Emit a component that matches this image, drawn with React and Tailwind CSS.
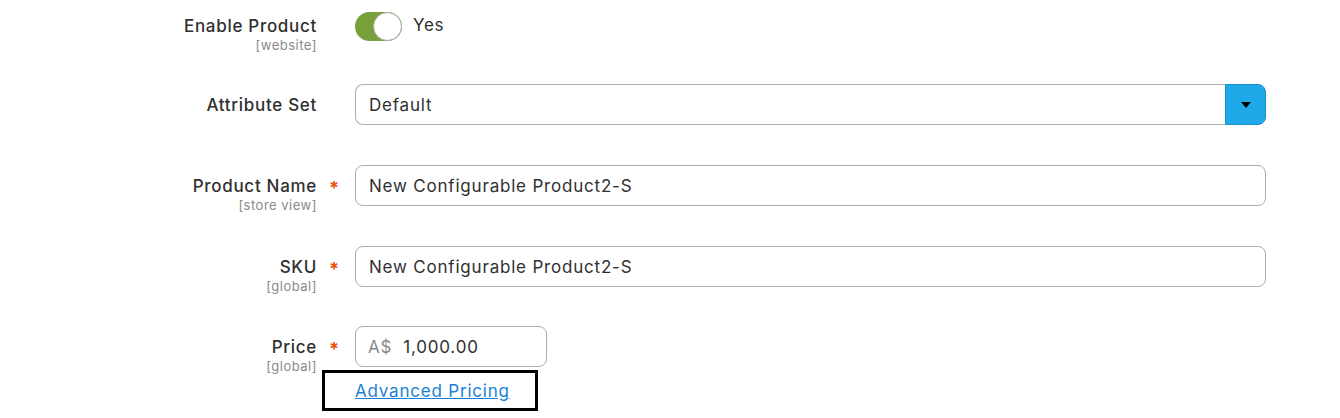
import React from "react";

const font = { fontFamily: "Inter, 'Open Sans', sans-serif" };

function Label({ title, scope, required, top = "pt-[11px]" }) {
  return (
    <>
      <div className={`w-[317px] shrink-0 text-right ${top}`}>
        <div className="text-[17px] leading-[20px] tracking-[0.7px] text-[#303030] font-medium">{title}</div>
        {scope && <div className="text-[13px] leading-[18px] tracking-[0.5px] text-[#8a8a8a]">{scope}</div>}
      </div>
      <div className={`w-[38px] shrink-0 pl-[12px] ${top}`}>
        {required && <span className="text-[18px] leading-[20px] font-bold text-[#eb5202]">*</span>}
      </div>
    </>
  );
}

function TextInput({ value }) {
  return (
    <div className="w-[911px] h-[41px] border border-[#adadad] rounded-[8px] bg-white flex items-center pt-[2px] pl-[13px] text-[17px] tracking-[0.8px] text-[#303030]">
      {value}
    </div>
  );
}

export default function App() {
  return (
    <div className="w-[1340px] h-[418px] bg-white overflow-hidden pt-[12px]" style={font}>
      {/* Enable Product */}
      <div className="flex items-start h-[29px]">
        <Label title="Enable Product" scope="[website]" top="pt-[4px]" />
        <div className="flex items-center gap-[11px]">
          <div className="w-[47px] h-[29px] rounded-full bg-[#79a13b] flex items-center justify-end">
            <div className="w-[29px] h-[29px] rounded-full bg-white border border-[#a9a9a9]" />
          </div>
          <span className="text-[17px] tracking-[0.7px] text-[#303030] -mt-[2px]">Yes</span>
        </div>
      </div>

      {/* Attribute Set */}
      <div className="flex items-start h-[41px] mt-[43px]">
        <Label title="Attribute Set" />
        <div className="w-[911px] h-[41px] flex">
          <div className="flex-1 border border-r-0 border-[#adadad] rounded-l-[8px] flex items-center pt-[2px] pl-[13px] text-[17px] tracking-[0.8px] text-[#303030]">
            Default
          </div>
          <div className="w-[41px] bg-[#1fa9e8] border border-[#1a8fc9] rounded-r-[8px] flex items-center justify-center">
            <div className="w-0 h-0 border-l-[5px] border-r-[5px] border-t-[6px] border-l-transparent border-r-transparent border-t-black" />
          </div>
        </div>
      </div>

      {/* Product Name */}
      <div className="flex items-start h-[41px] mt-[40px]">
        <Label title="Product Name" scope="[store view]" required />
        <TextInput value="New Configurable Product2-S" />
      </div>

      {/* SKU */}
      <div className="flex items-start h-[41px] mt-[40px]">
        <Label title="SKU" scope="[global]" required />
        <TextInput value="New Configurable Product2-S" />
      </div>

      {/* Price */}
      <div className="flex items-start h-[41px] mt-[39px]">
        <Label title="Price" scope="[global]" required />
        <div className="w-[192px] h-[41px] border border-[#adadad] rounded-[8px] flex items-center pt-[2px] pl-[12px] text-[17px] tracking-[0.8px]">
          <span className="text-[#8a8a8a]">A$</span>
          <span className="ml-[11px] text-[#303030]">1,000.00</span>
        </div>
      </div>

      <div className="ml-[322px] mt-[3px] w-[216px] h-[41px] border-[3px] border-black flex items-center pt-[3px] pl-[30px]">
        <a href="#" className="text-[17px] tracking-[0.8px] text-[#1a7fd6] underline">Advanced Pricing</a>
      </div>
    </div>
  );
}
